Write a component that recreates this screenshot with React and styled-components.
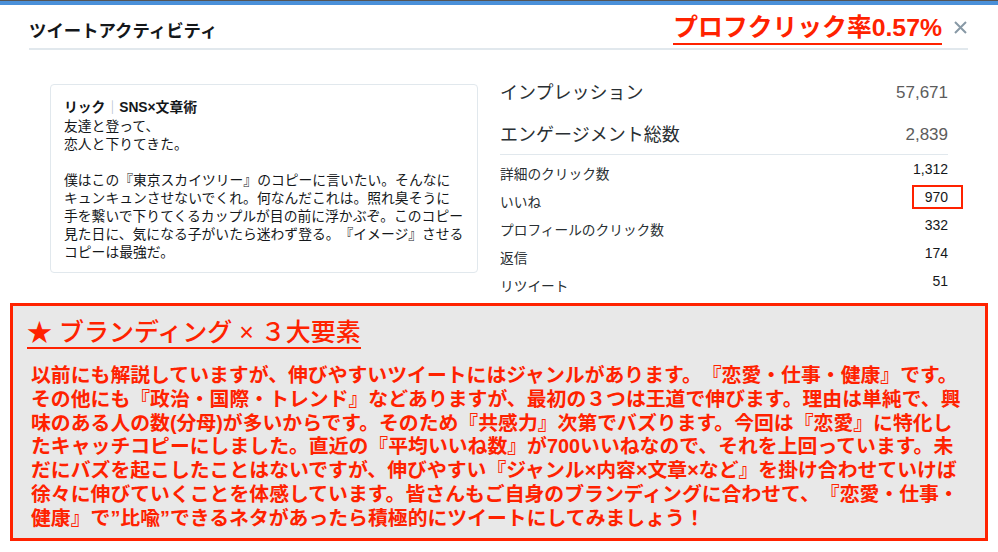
import React from "react";
import styled, { createGlobalStyle } from "styled-components";

const GlobalStyle = createGlobalStyle`
  body {
    margin: 0;
    background: #fff;
    font-family: "Liberation Sans", "Noto Sans CJK JP", sans-serif;
    color: #14171a;
    text-spacing-trim: space-all;
  }
`;

const RED = "#ff2200";

const TopBar = styled.div`
  height: 4px;
  background: #4a90d9;
  border-top: 1px solid #555;
`;
const Modal = styled.div`
  padding: 0 30px 0 29px;
`;
const Header = styled.div`
  display: flex;
  justify-content: space-between;
  align-items: center;
  box-sizing: border-box;
  height: 45px;
  padding: 5px 1px 0 0;
  border-bottom: 2px solid #e1e8ed;
`;
const Title = styled.h3`
  margin: 0;
  font-size: 17.4px;
  font-weight: bold;
  color: #14171a;
`;
const HeaderRight = styled.div`
  display: flex;
  align-items: center;
  gap: 12px;
`;
const Rate = styled.span`
  font-size: 24.8px;
  font-weight: bold;
  line-height: 30px;
  color: ${RED};
  border-bottom: 2.5px solid ${RED};
`;
const Close = styled.svg`
  width: 13px;
  height: 13px;
  margin-top: -4px;
`;
const Content = styled.div`
  display: flex;
  align-items: flex-start;
  gap: 22px;
  padding: 31px 20px 0 21px;
`;
const Card = styled.div`
  width: 428px;
  box-sizing: border-box;
  margin-top: 3px;
  padding: 13px 13px 10px;
  border: 1px solid #e1e8ed;
  border-radius: 4px;
`;
const Author = styled.div`
  font-size: 13.8px;
  font-weight: bold;
  line-height: 20px;
`;
const Bar = styled.span`
  font-weight: normal;
  color: #aab8c2;
`;
const TweetLine = styled.div`
  font-size: 13.8px;
  line-height: 18px;
  min-height: 18px;
  white-space: nowrap;
`;
const Stats = styled.div`
  flex: 1;
`;
const BigRow = styled.div`
  display: flex;
  justify-content: space-between;
  align-items: center;
  font-size: 18px;
  line-height: 24px;
  color: #292f33;
  margin-bottom: ${(p) => (p.last ? "0" : "18px")};
  padding-bottom: ${(p) => (p.last ? "7px" : "0")};
  border-bottom: ${(p) => (p.last ? "1px solid #e1e8ed" : "none")};
`;
const BigValue = styled.span`
  font-size: 17px;
  color: #5c5c5c;
`;
const SmallList = styled.div`
  padding-top: 4px;
`;
const SmallRow = styled.div`
  display: flex;
  justify-content: space-between;
  align-items: center;
  height: 28px;
  font-size: 13.7px;
  color: #292f33;
`;
const SmallValue = styled.span`
  position: relative;
  display: block;
  font-size: 14px;
  line-height: 18px;
  margin-bottom: 8px;
  color: #14171a;
`;
const Highlight = styled.span`
  position: absolute;
  left: -13px;
  right: -15px;
  top: -3px;
  bottom: -3px;
  border: 2.5px solid ${RED};
`;
const Note = styled.div`
  margin: 4px 10px 10px;
  padding: 11px 14px 7px;
  border: 3px solid ${RED};
  background: #e8e8e8;
  color: ${RED};
`;
const NoteHeading = styled.span`
  display: inline-block;
  font-size: 25px;
  font-weight: 500;
  line-height: 30px;
  border-bottom: 2.5px solid ${RED};
`;
const NoteBody = styled.div`
  margin-top: 15px;
  padding-left: 4px;
`;
const NoteLine = styled.div`
  font-size: 19.85px;
  font-weight: bold;
  line-height: 23.8px;
  white-space: nowrap;
`;

const tweet = [
  "友達と登って、",
  "恋人と下りてきた。",
  "",
  "僕はこの『東京スカイツリー』のコピーに言いたい。そんなに",
  "キュンキュンさせないでくれ。何なんだこれは。照れ臭そうに",
  "手を繋いで下りてくるカップルが目の前に浮かぶぞ。このコピー",
  "見た日に、気になる子がいたら迷わず登る。『イメージ』させる",
  "コピーは最強だ。",
];

const details = [
  { label: "詳細のクリック数", value: "1,312" },
  { label: "いいね", value: "970", mark: true },
  { label: "プロフィールのクリック数", value: "332" },
  { label: "返信", value: "174" },
  { label: "リツイート", value: "51" },
];

const note = [
  "以前にも解説していますが、伸びやすいツイートにはジャンルがあります。『恋愛・仕事・健康』です。",
  "その他にも『政治・国際・トレンド』などありますが、最初の３つは王道で伸びます。理由は単純で、興",
  "味のある人の数(分母)が多いからです。そのため『共感力』次第でバズります。今回は『恋愛』に特化し",
  "たキャッチコピーにしました。直近の『平均いいね数』が700いいねなので、それを上回っています。未",
  "だにバズを起こしたことはないですが、伸びやすい『ジャンル×内容×文章×など』を掛け合わせていけば",
  "徐々に伸びていくことを体感しています。皆さんもご自身のブランディングに合わせて、『恋愛・仕事・",
  "健康』で”比喩”できるネタがあったら積極的にツイートにしてみましょう！",
];

const App = () => {
  return (
    <>
      <GlobalStyle />
      <TopBar />
      <Modal>
        <Header>
          <Title>ツイートアクティビティ</Title>
          <HeaderRight>
            <Rate>プロフクリック率0.57%</Rate>
            <Close viewBox="0 0 13 13">
              <path
                d="M1 1L12 12M12 1L1 12"
                stroke="#8899a6"
                strokeWidth="2"
                fill="none"
              />
            </Close>
          </HeaderRight>
        </Header>
        <Content>
          <Card>
            <Author>
              リック<Bar>｜</Bar>SNS×文章術
            </Author>
            {tweet.map((t, i) => (
              <TweetLine key={i}>{t}</TweetLine>
            ))}
          </Card>
          <Stats>
            <BigRow>
              <span>インプレッション</span>
              <BigValue>57,671</BigValue>
            </BigRow>
            <BigRow last>
              <span>エンゲージメント総数</span>
              <BigValue>2,839</BigValue>
            </BigRow>
            <SmallList>
              {details.map((d) => (
                <SmallRow key={d.label}>
                  <span>{d.label}</span>
                  <SmallValue>
                    {d.value}
                    {d.mark && <Highlight />}
                  </SmallValue>
                </SmallRow>
              ))}
            </SmallList>
          </Stats>
        </Content>
      </Modal>
      <Note>
        <NoteHeading>★ ブランディング × ３大要素</NoteHeading>
        <NoteBody>
          {note.map((l, i) => (
            <NoteLine key={i}>{l}</NoteLine>
          ))}
        </NoteBody>
      </Note>
    </>
  );
};

export default App;
